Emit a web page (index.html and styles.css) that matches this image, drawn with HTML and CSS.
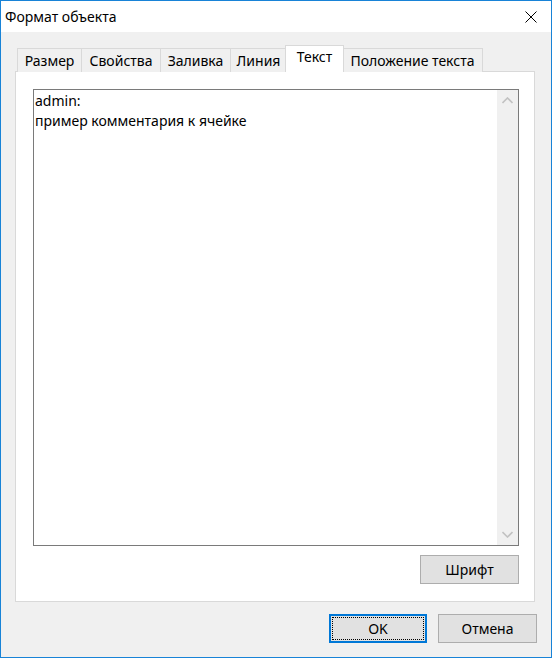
FILE: index.html
```html
<!DOCTYPE html>
<html lang="ru">
<head>
<meta charset="utf-8">
<title>Формат объекта</title>
<link rel="stylesheet" href="styles.css">
</head>
<body>
<div class="window">
  <div class="titlebar">
    <span class="title">Формат объекта</span>
    <span class="close">
      <svg width="12" height="12" viewBox="0 0 12 12"><path d="M0.5 0.5 L11.5 11.5 M11.5 0.5 L0.5 11.5" stroke="#000" stroke-width="1" fill="none"/></svg>
    </span>
  </div>
  <div class="client">
    <div class="tabs">
      <div class="tab tab-size">Размер</div>
      <div class="tab tab-props">Свойства</div>
      <div class="tab tab-fill">Заливка</div>
      <div class="tab tab-line">Линия</div>
      <div class="tab tab-text active">Текст</div>
      <div class="tab tab-pos">Положение текста</div>
    </div>
    <div class="panel">
      <div class="editor">
        <div class="editor-text">admin:<br>пример комментария к ячейке</div>
        <div class="scrollbar">
          <svg class="chev" width="11" height="7" viewBox="0 0 11 7"><path d="M0.5 6 L5.5 1 L10.5 6" stroke="#c2c2c2" stroke-width="1.6" fill="none"/></svg>
          <svg class="chev" width="11" height="7" viewBox="0 0 11 7"><path d="M0.5 1 L5.5 6 L10.5 1" stroke="#c2c2c2" stroke-width="1.6" fill="none"/></svg>
        </div>
      </div>
      <div class="panel-actions">
        <button class="btn">Шрифт</button>
      </div>
    </div>
    <div class="dialog-actions">
      <button class="btn btn-default"><span class="focus">OK</span></button>
      <button class="btn">Отмена</button>
    </div>
  </div>
</div>
</body>
</html>
```

FILE: styles.css
```css
html, body {
  margin: 0;
  padding: 0;
  background: #ffffff;
}

body {
  font-family: "Noto Sans", "Liberation Sans", Arial, sans-serif;
  font-size: 14px;
  color: #000;
}

.window {
  width: 552px;
  height: 658px;
  box-sizing: border-box;
  border: 1px solid #1883d7;
  display: flex;
  flex-direction: column;
  background: #f0f0f0;
}

.titlebar {
  height: 31px;
  flex: none;
  background: #ffffff;
  display: flex;
  align-items: center;
  justify-content: space-between;
  padding-left: 4px;
}

.title {
  font-size: 14px;
  line-height: 18px;
}

.close {
  display: flex;
  margin-right: 14px;
  padding-top: 1px;
}

.client {
  flex: 1;
  display: flex;
  flex-direction: column;
  padding: 14px 16px 14px 14px;
}

.tabs {
  display: flex;
  align-items: flex-end;
  padding-left: 2px;
  height: 26px;
  margin-bottom: -1px;
  position: relative;
  z-index: 1;
}

.tab {
  height: 24px;
  box-sizing: border-box;
  border: 1px solid #d9d9d9;
  border-bottom: none;
  background: #f0f0f0;
  margin-left: -1px;
  display: flex;
  align-items: center;
  justify-content: center;
  line-height: 18px;
}

.tab:first-child {
  margin-left: 0;
}

.tab-size { width: 65px; }
.tab-props { width: 80px; }
.tab-fill { width: 71px; }
.tab-line { width: 57px; }
.tab-text { width: 59px; }
.tab-pos { width: 141px; }

.tab.active {
  height: 27px;
  background: #ffffff;
  margin-left: -2px;
  margin-right: -1px;
  padding-bottom: 4px;
  position: relative;
  z-index: 2;
}

.panel {
  height: 531px;
  box-sizing: border-box;
  border: 1px solid #d9d9d9;
  background: #ffffff;
  display: flex;
  flex-direction: column;
  padding: 17px 15px 17px 17px;
}

.editor {
  flex: 1;
  display: flex;
  border: 1px solid #7a7a7a;
  background: #ffffff;
}

.editor-text {
  flex: 1;
  padding: 1px 1px;
  line-height: 20px;
}

.scrollbar {
  width: 21px;
  background: #f0f0f0;
  display: flex;
  flex-direction: column;
  justify-content: space-between;
  align-items: center;
  padding: 7px 0 7px;
}

.panel-actions {
  display: flex;
  justify-content: flex-end;
  margin-top: 9px;
}

.btn {
  width: 99px;
  height: 29px;
  box-sizing: border-box;
  border: 1px solid #adadad;
  background: #e1e1e1;
  font-family: "Noto Sans", "Liberation Sans", Arial, sans-serif;
  font-size: 14px;
  line-height: 18px;
  color: #000;
  padding: 0;
  display: flex;
  align-items: center;
  justify-content: center;
}

.dialog-actions {
  margin-top: auto;
  display: flex;
  justify-content: flex-end;
  gap: 11px;
  margin-right: -2px;
}

.btn-default {
  width: 98px;
  border: 2px solid #0078d7;
  padding: 1px;
}

.focus {
  flex: 1;
  align-self: stretch;
  display: flex;
  align-items: center;
  justify-content: center;
  outline: 1px dotted #000;
  outline-offset: -1px;
}
```
